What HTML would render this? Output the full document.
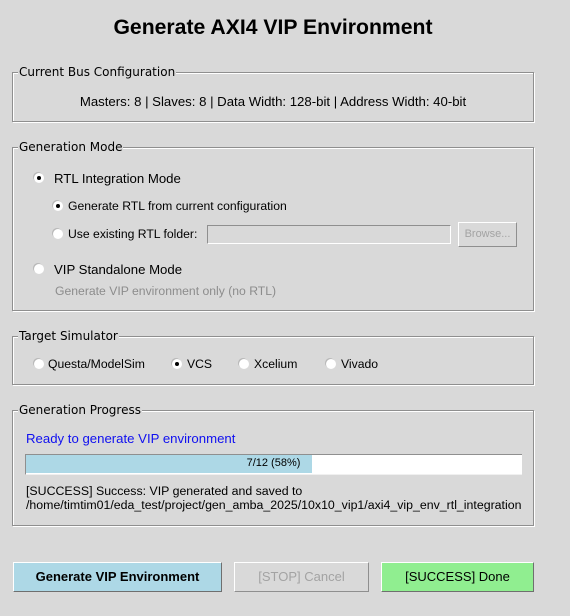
<!DOCTYPE html>
<html><head><style>
*{margin:0;padding:0;box-sizing:border-box}
body{width:570px;height:616px;background:#d9d9d9;font-family:"Liberation Sans",sans-serif;font-size:13.2px;color:#000;position:relative;overflow:hidden}
.a{position:absolute;white-space:nowrap}
.fr{position:absolute;border:1px solid #8f8f8f;box-shadow:inset 1px 1px 0 #fff,1px 1px 0 #fff}
.lb{position:absolute;background:#d9d9d9;font-family:"DejaVu Sans",sans-serif;font-size:12px;padding:0 1px;line-height:14px}
.r{position:absolute;width:10px;height:10px;border-radius:50%;background:#fff;box-shadow:-1px -1px 0 #b8b8b8}
.r.on::after{content:"";position:absolute;left:3px;top:3px;width:4px;height:4px;border-radius:50%;background:#000}
.btn{position:absolute;text-align:center;line-height:28px;font-size:13px}
.s{font-size:12.2px}
</style></head><body>
<div class="a" style="left:0;width:546px;text-align:center;top:16px;font-size:21.2px;font-weight:bold">Generate AXI4 VIP Environment</div>

<div class="fr" style="left:12px;top:72px;width:522px;height:50px"></div>
<div class="lb" style="left:18px;top:65px">Current Bus Configuration</div>
<div class="a" style="left:0;width:546px;text-align:center;top:94px">Masters: 8 | Slaves: 8 | Data Width: 128-bit | Address Width: 40-bit</div>

<div class="fr" style="left:12px;top:147px;width:522px;height:164px"></div>
<div class="lb" style="left:18px;top:140px">Generation Mode</div>
<div class="r on" style="left:34px;top:173px"></div>
<div class="a" style="left:54px;top:171px">RTL Integration Mode</div>
<div class="r on" style="left:53px;top:201px"></div>
<div class="a s" style="left:68px;top:199px">Generate RTL from current configuration</div>
<div class="r" style="left:53px;top:229px"></div>
<div class="a s" style="left:68px;top:227px">Use existing RTL folder:</div>
<div class="a" style="left:207px;top:225px;width:244px;height:19px;border:1px solid #8f8f8f;border-right-color:#fff;border-bottom-color:#fff"></div>
<div class="a" style="left:458px;top:222px;width:59px;height:25px;border:1px solid #fff;border-right-color:#8f8f8f;border-bottom-color:#8f8f8f;color:#a3a3a3;font-size:11px;text-align:center;line-height:23px">Browse...</div>
<div class="r" style="left:34px;top:264px"></div>
<div class="a" style="left:54px;top:262px">VIP Standalone Mode</div>
<div class="a s" style="left:55px;top:284px;color:#8c8c8c">Generate VIP environment only (no RTL)</div>

<div class="fr" style="left:12px;top:336px;width:522px;height:49px"></div>
<div class="lb" style="left:18px;top:329px">Target Simulator</div>
<div class="r" style="left:34px;top:359px"></div>
<div class="a s" style="left:48px;top:357px">Questa/ModelSim</div>
<div class="r on" style="left:172px;top:359px"></div>
<div class="a s" style="left:187px;top:357px">VCS</div>
<div class="r" style="left:239px;top:359px"></div>
<div class="a s" style="left:254px;top:357px">Xcelium</div>
<div class="r" style="left:326px;top:359px"></div>
<div class="a s" style="left:341px;top:357px">Vivado</div>

<div class="fr" style="left:12px;top:410px;width:522px;height:116px"></div>
<div class="lb" style="left:18px;top:403px">Generation Progress</div>
<div class="a" style="left:26px;top:431px;color:#1010f0">Ready to generate VIP environment</div>
<div class="a" style="left:25px;top:454px;width:497px;height:21px;background:#fff;border-top:1px solid #8f8f8f;border-left:1px solid #8f8f8f;border-bottom:1px solid #f0f0f0"></div>
<div class="a" style="left:26px;top:455px;width:286px;height:18px;background:#add8e6"></div>
<div class="a" style="left:25px;width:497px;text-align:center;top:457px;font-size:11px">7/12 (58%)</div>
<div class="a" style="left:26px;top:484px;font-size:12.35px;line-height:14px">[SUCCESS] Success: VIP generated and saved to<br>/home/timtim01/eda_test/project/gen_amba_2025/10x10_vip1/axi4_vip_env_rtl_integration</div>

<div class="btn" style="left:13px;top:562px;width:209px;height:30px;background:#add8e6;border:1px solid #fff;border-right-color:#6f6f6f;border-bottom-color:#6f6f6f;font-weight:bold">Generate VIP Environment</div>
<div class="btn" style="left:234px;top:562px;width:135px;height:30px;border:1px solid #fff;border-right-color:#8f8f8f;border-bottom-color:#8f8f8f;color:#a3a3a3">[STOP] Cancel</div>
<div class="btn" style="left:381px;top:562px;width:153px;height:30px;background:#90ee90;border:1px solid #fff;border-right-color:#6f6f6f;border-bottom-color:#6f6f6f">[SUCCESS] Done</div>
</body></html>
